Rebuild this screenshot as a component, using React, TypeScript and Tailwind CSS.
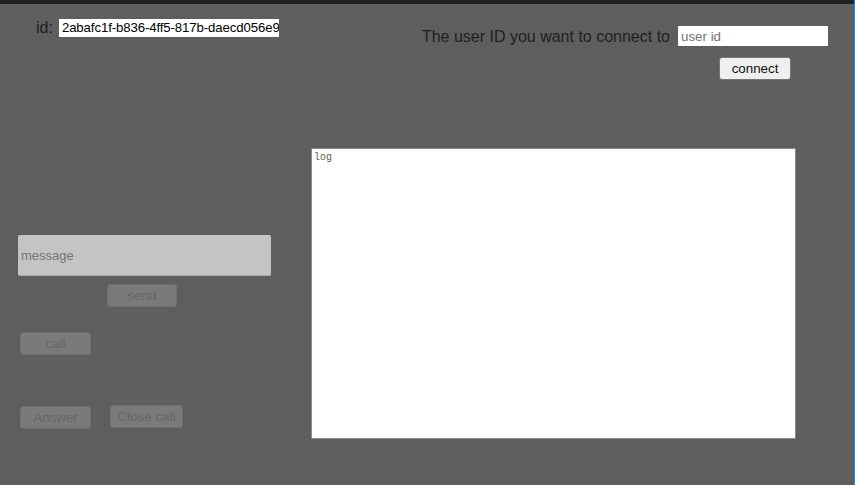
import { useState } from 'react';

const font = { fontFamily: '"Liberation Sans", Arial, sans-serif' };

/** Tombol bawaan browser yang dimatikan (disabled) */
function DimButton({ label, className }: { label: string; className: string }) {
    return (
        <button
            type="button"
            disabled
            className={`h-[23px] rounded-[3px] border border-[#6f6f6f] bg-[#7a7a7a] text-[13.33px] text-[#676767] ${className}`}
        >
            {label}
        </button>
    );
}

export default function App() {
    const [peerId, setPeerId] = useState('');
    const [message, setMessage] = useState('');

    return (
        <div
            className="flex h-[485px] w-[855px] flex-col overflow-hidden border-r border-[#3b86d6] bg-[#5e5e5e]"
            style={font}
        >
            {/* Garis atas */}
            <div className="h-[4px] w-full bg-[#202124]" />

            {/* Header: id sendiri dan form connect */}
            <div className="flex items-start">
                <div className="ml-[36px] mt-[15px] flex items-center">
                    <span className="text-[16px] leading-[18px] text-[#1f1f1f]">id:</span>
                    <input
                        readOnly
                        value="2abafc1f-b836-4ff5-817b-daecd056e9"
                        className="ml-[6px] h-[18px] w-[220px] bg-white pl-[3px] pr-0 text-[13.2px] tracking-[-0.1px] text-black outline-none"
                    />
                </div>

                <div className="ml-auto mr-[26px] mt-[22px] flex flex-col">
                    <div className="flex items-center">
                        <span className="ml-px text-[16px] leading-[19px] text-[#1f1f1f]">
                            The user ID you want to connect to
                        </span>
                        <input
                            value={peerId}
                            onChange={(e) => setPeerId(e.target.value)}
                            placeholder="user id"
                            className="ml-[8px] h-[20px] w-[150px] bg-white px-[3px] text-[13.33px] text-black outline-none placeholder:text-[#757575]"
                        />
                    </div>
                    <button
                        type="button"
                        className="mr-[37px] mt-[11px] h-[23px] w-[72px] self-end rounded-[3px] border border-[#767676] bg-[#efefef] text-[13.33px] text-[#111]"
                    >
                        connect
                    </button>
                </div>
            </div>

            {/* Konten utama */}
            <div className="mt-[68px] flex items-start">
                <div className="flex w-[312px] flex-col items-start pl-[18px] pt-[87px]">
                    <input
                        value={message}
                        onChange={(e) => setMessage(e.target.value)}
                        placeholder="message"
                        className="h-[41px] w-[253px] rounded-[2px] border-b border-[#a9a9a9] bg-[#c4c4c4] px-[3px] text-[13px] text-black outline-none placeholder:text-[#747474]"
                    />
                    <DimButton label="send" className="ml-[89px] mt-[8px] w-[70px]" />
                    <DimButton label="call" className="ml-[2px] mt-[25px] h-[22px] w-[71px]" />
                    <div className="ml-[2px] mt-[50px] flex items-start">
                        <DimButton label="Answer" className="mt-[1px] w-[71px]" />
                        <DimButton label="Close call" className="ml-[19px] w-[73px]" />
                    </div>
                </div>

                <textarea
                    readOnly
                    placeholder="log"
                    className="-ml-px h-[291px] w-[485px] resize-none border border-[#8a8a8a] bg-white px-[2px] py-[3px] text-[10px] leading-[12px] outline-none placeholder:text-[#6b5a4f]"
                    style={{ fontFamily: '"Liberation Mono", "Courier New", monospace' }}
                />
            </div>
        </div>
    );
}
